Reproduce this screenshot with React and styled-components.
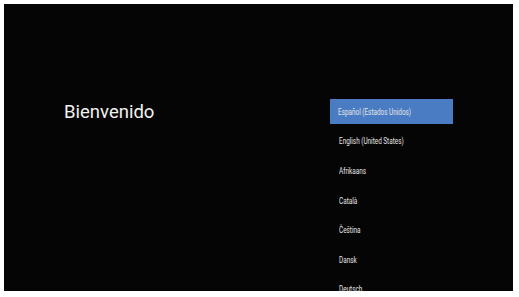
import React from "react";
import styled, { createGlobalStyle } from "styled-components";

const GlobalStyle = createGlobalStyle`
  html, body {
    margin: 0;
    padding: 0;
    background: #ffffff;
  }
  body {
    font-family: Roboto, "Liberation Sans", sans-serif;
  }
`;

// TV 화면 영역
const Screen = styled.div`
  margin: 4px;
  width: 509px;
  height: 287px;
  background: #050505;
  overflow: hidden;
  display: flex;
  align-items: flex-start;
  padding-top: 93px;
  box-sizing: border-box;
`;

const Left = styled.div`
  width: 326px;
  padding-left: 60px;
  box-sizing: border-box;
`;

const Title = styled.h1`
  margin: 0;
  font-family: Roboto, "Open Sans", sans-serif;
  font-weight: 400;
  font-size: 18.5px;
  line-height: 30px;
  color: #f2f2f2;
`;

const List = styled.ul`
  margin: 0;
  padding: 0;
  list-style: none;
  display: flex;
  flex-direction: column;
`;

const Row = styled.li`
  flex-shrink: 0;
  height: 29.6px;
  display: flex;
  align-items: center;
`;

const Item = styled.div`
  width: 123px;
  height: 25px;
  display: flex;
  align-items: center;
  padding-left: ${(p) => (p.$selected ? "8px" : "9px")};
  box-sizing: border-box;
  background: ${(p) => (p.$selected ? "#4a7cc3" : "transparent")};
`;

const Label = styled.span`
  display: inline-block;
  font-family: Roboto, "Liberation Sans", sans-serif;
  font-size: 8.2px;
  color: #e6e6e6;
  white-space: nowrap;
  transform: scaleX(0.78);
  transform-origin: left center;
`;

const languages = [
  "Español (Estados Unidos)",
  "English (United States)",
  "Afrikaans",
  "Català",
  "Čeština",
  "Dansk",
  "Deutsch",
];

const App = () => {
  return (
    <>
      <GlobalStyle />
      <Screen>
        <Left>
          <Title>Bienvenido</Title>
        </Left>
        <List>
          {languages.map((lang, i) => (
            <Row key={lang}>
              <Item $selected={i === 0}>
                <Label>{lang}</Label>
              </Item>
            </Row>
          ))}
        </List>
      </Screen>
    </>
  );
};

export default App;
